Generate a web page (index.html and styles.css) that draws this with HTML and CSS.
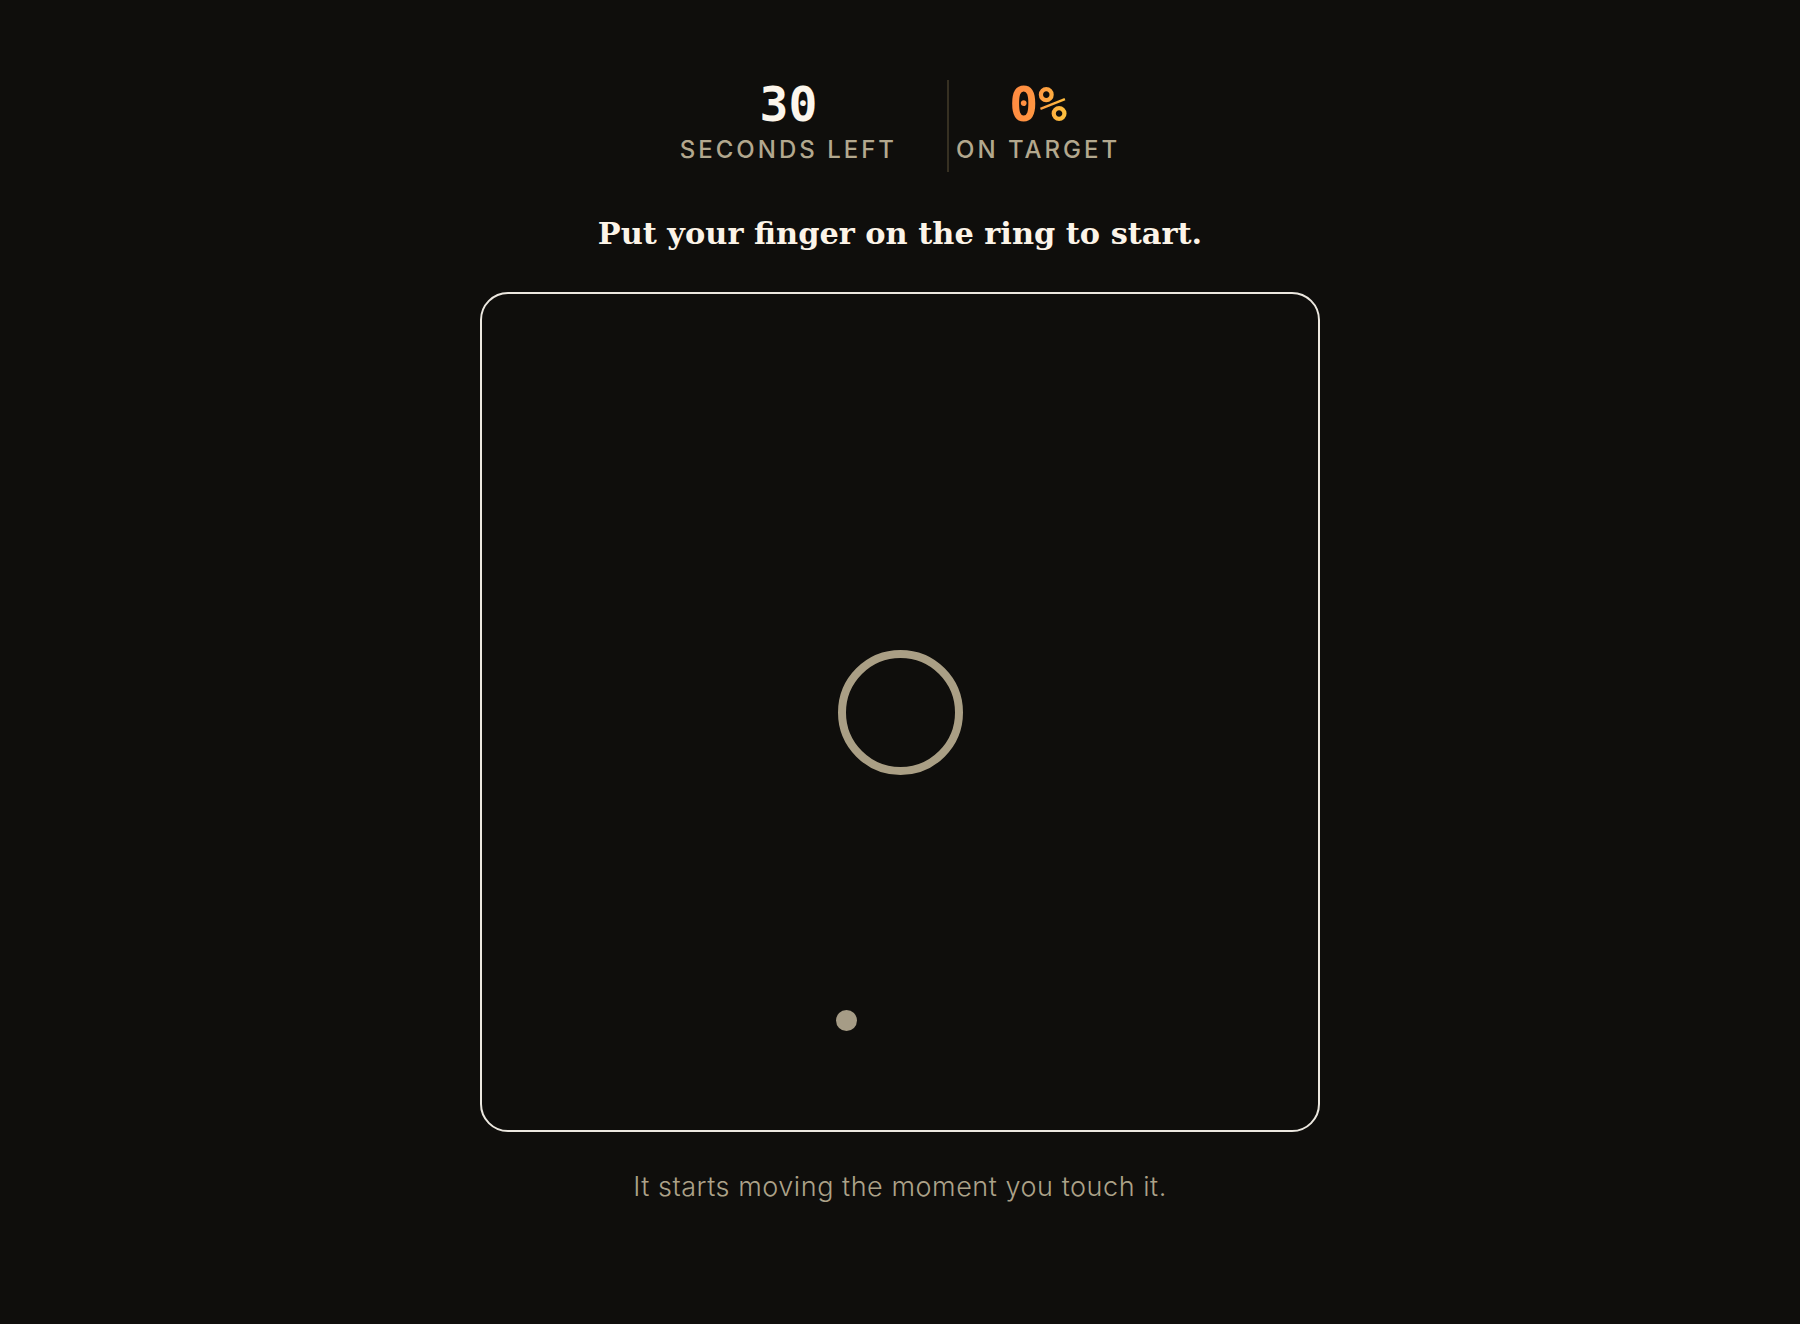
FILE: index.html
```html
<!DOCTYPE html>
<html lang="en">
<head>
<meta charset="utf-8">
<title>Track the ring</title>
<link rel="stylesheet" href="styles.css">
</head>
<body>
<main class="page">
  <div class="stats">
    <div class="stat stat-time">
      <div class="stat-value">30</div>
      <div class="stat-label">SECONDS LEFT</div>
    </div>
    <div class="stat-divider"></div>
    <div class="stat stat-accuracy">
      <div class="stat-value accent">0%</div>
      <div class="stat-label">ON TARGET</div>
    </div>
  </div>
  <h1 class="prompt">Put your finger on the ring to start.</h1>
  <div class="arena">
    <div class="ring"></div>
    <div class="finger" style="left: 354px; top: 716px;"></div>
  </div>
  <p class="hint">It starts moving the moment you touch it.</p>
</main>
</body>
</html>
```

FILE: styles.css
```css
html, body {
  margin: 0;
  padding: 0;
  background: #0f0e0c;
}

.page {
  display: flex;
  flex-direction: column;
  align-items: center;
  padding-top: 80px;
  min-height: 1324px;
  box-sizing: border-box;
}

.stats {
  display: flex;
  align-items: stretch;
}

.stat {
  display: flex;
  flex-direction: column;
  align-items: center;
  padding-bottom: 4px;
}

.stat-time {
  padding-right: 50px;
}

.stat-accuracy {
  padding-left: 7px;
}

.stat-divider {
  width: 2px;
  background: #363022;
}

.stat-value {
  font-family: "DejaVu Sans Mono", monospace;
  font-weight: 700;
  font-size: 48px;
  line-height: 48px;
  color: #fcf6ec;
}

.stat-value.accent {
  background: linear-gradient(100deg, #ff8740 0%, #ff9642 45%, #ffc63d 100%);
  -webkit-background-clip: text;
  background-clip: text;
  color: transparent;
}

.stat-label {
  margin-top: 4px;
  font-family: "Inter", sans-serif;
  font-weight: 500;
  font-size: 24px;
  line-height: 36px;
  letter-spacing: 0.125em;
  color: #b3a88e;
}

.prompt {
  margin: 41px 0 0;
  font-family: "DejaVu Serif", serif;
  font-weight: 700;
  font-size: 30.4px;
  line-height: 40px;
  letter-spacing: 0;
  color: #fcf4e8;
}

.arena {
  position: relative;
  margin-top: 39px;
  width: 840px;
  height: 840px;
  box-sizing: border-box;
  border: 2px solid #ece8e0;
  border-radius: 28px;
  display: flex;
  align-items: center;
  justify-content: center;
}

.ring {
  width: 125px;
  height: 125px;
  box-sizing: border-box;
  border: 8.5px solid #aa9f85;
  border-radius: 50%;
}

.finger {
  position: absolute;
  width: 21px;
  height: 21px;
  border-radius: 50%;
  background: #a69c86;
}

.hint {
  margin: 37px 0 0;
  font-family: "Inter", sans-serif;
  font-weight: 300;
  font-size: 27px;
  line-height: 36px;
  letter-spacing: 0.02em;
  color: #aca289;
}
```
